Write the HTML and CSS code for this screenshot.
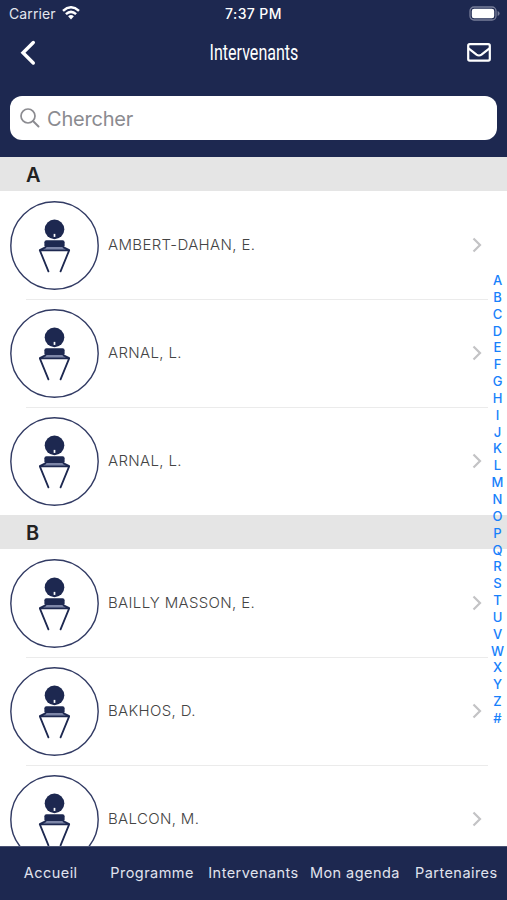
FILE: index.html
```
<!DOCTYPE html>
<html lang="fr">
<head>
  <meta charset="UTF-8">
  <meta name="viewport" content="width=device-width, initial-scale=1">
  <title>Intervenants</title>
  <link rel="stylesheet" href="styles.css">
</head>
<body>

  <!-- SHARED ICONS -->
  <svg class="sprite">
    <symbol id="speaker" viewBox="0 0 88 88">
      <circle cx="44" cy="44" r="43.2" fill="#fff" stroke="#323b64" stroke-width="1.400"/>
      <circle cx="44" cy="28" r="9.700" fill="#1d2850"/>
      <path d="M44 32.500v3" stroke="#fff" stroke-width="1.700"/>
      <rect x="34" y="38.800" width="20" height="7" rx="2" fill="#1d2850"/>
      <path d="M34.500 45.500h19l4 3h-27z" fill="#7d86a8"/>
      <path d="M38 69.500L29.500 48.800H58.500L50 69.500M29.500 48.500L35 45.800M58.500 48.500L53 45.800" fill="none" stroke="#1d2850" stroke-width="1.800" stroke-linecap="round" stroke-linejoin="round"/>
    </symbol>
    <symbol id="chevron" viewBox="0 0 10 16">
      <path d="M1.500 1.500L8 8L1.500 14.500" fill="none" stroke="#c3c3c5" stroke-width="2.200"/>
    </symbol>
  </svg>

  <div class="app">
    <!-- HEADER -->
    <header class="header">
      <div class="status">
        <div class="carrier">
          <span class="carrier-name">Carrier</span>
          <svg class="wifi" width="18" height="14" viewBox="0 0 18 14">
            <g fill="none" stroke="#fff" stroke-width="2.500">
              <path d="M1 4.900Q9 -2.300 17 4.900"/>
              <path d="M3.900 8.100Q9 3.600 14.100 8.100"/>
            </g>
            <path d="M6.100 10.200Q9 8 11.900 10.200L9 13.400z" fill="#fff"/>
          </svg>
        </div>
        <span class="time">7:37 PM</span>
        <svg class="battery" width="31" height="15" viewBox="0 0 31 15">
          <rect x="1" y="1" width="26" height="13" rx="4" fill="none" stroke="#777d99" stroke-width="1.300"/>
          <rect x="2.800" y="2.800" width="22.400" height="9.400" rx="2.300" fill="#fff"/>
          <path d="M28.600 5v5q2-.8 2-2.500t-2-2.500z" fill="#777d99"/>
        </svg>
      </div>

      <div class="navbar">
        <svg class="back" width="16" height="26" viewBox="0 0 16 26">
          <path d="M13.300 2.500L3 12.700L13.300 23" fill="none" stroke="#fff" stroke-width="3.400" stroke-linecap="round"/>
        </svg>
        <h1 class="title">Intervenants</h1>
        <svg class="mail" width="24" height="19" viewBox="0 0 24 19">
          <rect x="1.200" y="1.200" width="21.600" height="16.400" rx="1.500" fill="none" stroke="#fff" stroke-width="2.200"/>
          <path d="M1.500 5.300L9.500 11.600Q12 13.400 14.500 11.600L22.500 5.300" fill="none" stroke="#fff" stroke-width="2.200"/>
        </svg>
      </div>

      <div class="search">
        <svg width="20" height="20" viewBox="0 0 20 20">
          <circle cx="8" cy="8" r="7" fill="none" stroke="#8b8b90" stroke-width="1.700"/>
          <path d="M13 13L18.500 18.500" stroke="#8b8b90" stroke-width="2" stroke-linecap="round"/>
        </svg>
        <span class="placeholder">Chercher</span>
      </div>
    </header>

    <!-- SPEAKER LIST -->
    <main class="list">
      <h2 class="section">A</h2>
      <div class="row">
        <svg class="avatar"><use href="#speaker"/></svg>
        <span class="name">AMBERT-DAHAN, E.</span>
        <svg class="chevron"><use href="#chevron"/></svg>
      </div>
      <div class="row">
        <svg class="avatar"><use href="#speaker"/></svg>
        <span class="name">ARNAL, L.</span>
        <svg class="chevron"><use href="#chevron"/></svg>
      </div>
      <div class="row">
        <svg class="avatar"><use href="#speaker"/></svg>
        <span class="name">ARNAL, L.</span>
        <svg class="chevron"><use href="#chevron"/></svg>
      </div>
      <h2 class="section">B</h2>
      <div class="row">
        <svg class="avatar"><use href="#speaker"/></svg>
        <span class="name">BAILLY MASSON, E.</span>
        <svg class="chevron"><use href="#chevron"/></svg>
      </div>
      <div class="row">
        <svg class="avatar"><use href="#speaker"/></svg>
        <span class="name">BAKHOS, D.</span>
        <svg class="chevron"><use href="#chevron"/></svg>
      </div>
      <div class="row">
        <svg class="avatar"><use href="#speaker"/></svg>
        <span class="name">BALCON, M.</span>
        <svg class="chevron"><use href="#chevron"/></svg>
      </div>
    </main>

    <!-- TAB BAR -->
    <nav class="tabs">
      <a class="tab">Accueil</a>
      <a class="tab">Programme</a>
      <a class="tab">Intervenants</a>
      <a class="tab">Mon agenda</a>
      <a class="tab">Partenaires</a>
    </nav>

    <!-- ALPHABET INDEX, floats over the list -->
    <div class="index">
      <span>A</span><span>B</span><span>C</span><span>D</span><span>E</span><span>F</span><span>G</span>
      <span>H</span><span>I</span><span>J</span><span>K</span><span>L</span><span>M</span><span>N</span>
      <span>O</span><span>P</span><span>Q</span><span>R</span><span>S</span><span>T</span><span>U</span>
      <span>V</span><span>W</span><span>X</span><span>Y</span><span>Z</span><span>#</span>
    </div>
  </div>

</body>
</html>
```
FILE: styles.css
```
* {
  box-sizing: border-box;
}

body {
  margin: 0;
  font-family: Inter, "Liberation Sans", sans-serif;
  background: #fff;
  overflow: hidden;
}

.sprite {
  display: none;
}

.app {
  position: relative;
  display: flex;
  flex-direction: column;
  height: 900px;
}

/* HEADER */
.header {
  flex: none;
  height: 157px;
  background: #1d2850;
  color: #fff;
}

.status {
  display: grid;
  grid-template-columns: 1fr auto 1fr;
  align-items: center;
  height: 27px;
  padding: 0 7px 0 9px;
  font-size: 14px;
}

.carrier {
  display: flex;
  align-items: center;
  gap: 6px;
}

.carrier-name {
  color: #e4e6ee;
  letter-spacing: 0.1px;
}

.wifi {
  margin-top: -2px;
}

.time {
  font-weight: 500;
  font-size: 14px;
  letter-spacing: 0.4px;
  margin-right: 2px;
}

.battery {
  justify-self: end;
  margin-top: -1px;
}

.navbar {
  display: grid;
  grid-template-columns: 1fr auto 1fr;
  align-items: center;
  height: 51px;
  padding: 0 16px 0 20px;
}

/* narrow face for the page title */
.title {
  width: 88px;
  margin: 0 4px 0 0;
  display: flex;
  justify-content: center;
  font-family: Roboto, sans-serif;
  font-size: 22px;
  font-weight: 400;
  line-height: 24px;
  transform: scaleX(0.73);
}

.mail {
  justify-self: end;
}

.search {
  display: flex;
  align-items: center;
  gap: 7px;
  height: 44px;
  margin: 18px 10px 0 10px;
  padding-left: 10px;
  border-radius: 12px;
  background: #fff;
}

.placeholder {
  padding-top: 1px;
  font-size: 20px;
  letter-spacing: -0.2px;
  color: #8b8b90;
}

/* LIST */
.list {
  flex: 1;
  min-height: 0;
  overflow: hidden;
}

.section {
  height: 34px;
  margin: 0;
  padding-left: 26px;
  background: #e5e5e5;
  color: #222;
  font-size: 20px;
  font-weight: 600;
  line-height: 37px;
}

.row {
  display: flex;
  align-items: center;
  height: 108px;
  padding: 0 25px 0 10px;
}

/* separator sits on the top edge of the following row */
.row + .row {
  background: linear-gradient(#ebebeb, #ebebeb) 26px 0 / 462px 1px no-repeat;
}

.avatar {
  width: 89px;
  height: 89px;
}

.name {
  flex: 1;
  padding: 0 0 1px 9px;
  font-size: 15px;
  font-weight: 300;
  letter-spacing: 0.35px;
  color: #444;
}

.chevron {
  width: 10px;
  height: 16px;
}

/* TAB BAR */
.tabs {
  flex: none;
  display: grid;
  grid-template-columns: repeat(5, 1fr);
  height: 54px;
  background: #1d2850;
  border-top: 1px solid #4a5273;
}

.tab {
  color: #e0e3ee;
  font-size: 14.5px;
  letter-spacing: 0.45px;
  line-height: 51px;
  text-align: center;
  white-space: nowrap;
}

/* ALPHABET INDEX */
.index {
  position: absolute;
  top: 272px;
  right: 0;
  width: 19px;
  display: flex;
  flex-direction: column;
  color: #1781fb;
  font-size: 13px;
  font-weight: 500;
  line-height: 16.85px;
  text-align: center;
}
```
